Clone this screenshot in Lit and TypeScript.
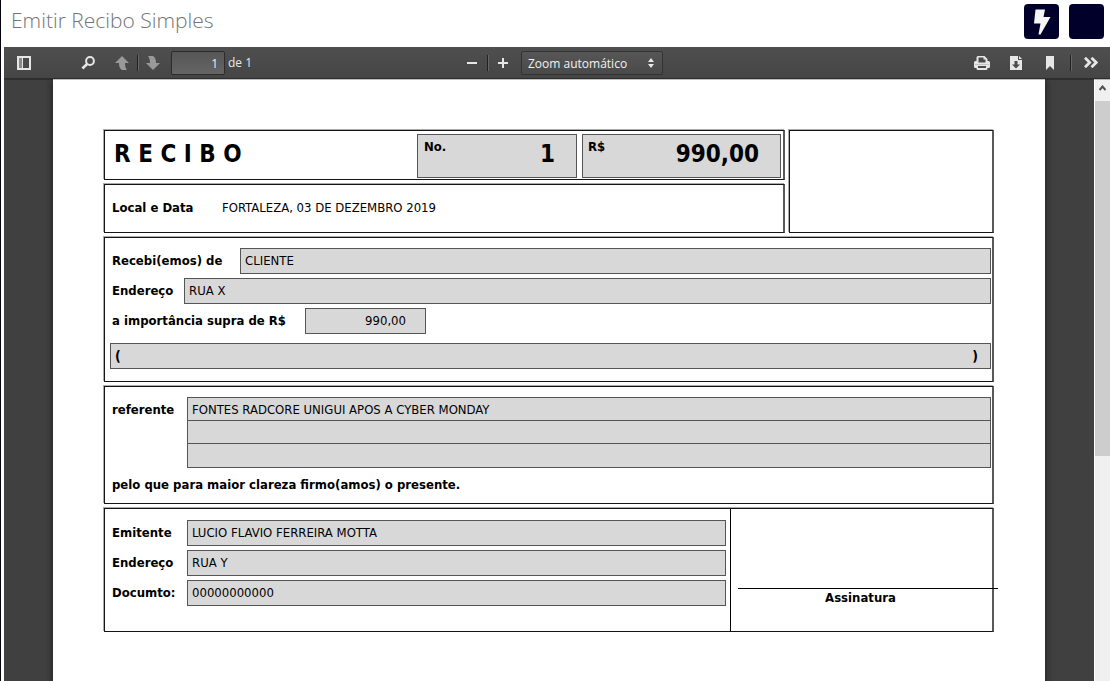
import { LitElement, html, css, svg } from "lit";
import { customElement } from "lit/decorators.js";

const icon = (w: number, h: number, body: unknown) => html`
  <svg width=${w} height=${h} viewBox="0 0 ${w} ${h}" aria-hidden="true">${body}</svg>
`;

@customElement("viewer-toolbar")
class ViewerToolbar extends LitElement {
  static styles = css`
    :host {
      display: flex;
      align-items: center;
      justify-content: space-between;
      box-sizing: border-box;
      height: 32px;
      background: linear-gradient(#4f4f4f, #454545);
      border-bottom: 1px solid #2e2e2e;
      box-shadow: 0 1px 0 rgba(0, 0, 0, 0.25);
      color: #e8e8e8;
      font: 12px/20px "Open Sans", "Noto Sans", sans-serif;
      position: relative;
    }
    .group {
      display: flex;
      align-items: center;
    }
    .left {
      flex: 1 1 0;
      padding-left: 8px;
    }
    .zoom {
      padding-left: 8px;
    }
    .right {
      flex: 1 1 0;
      justify-content: flex-end;
      padding-right: 7px;
    }
    button {
      display: flex;
      align-items: center;
      justify-content: center;
      width: 24px;
      height: 24px;
      padding: 0;
      border: 0;
      background: none;
      color: #e6e6e6;
    }
    button:disabled {
      color: #999;
    }
    .find {
      margin-left: 40px;
    }
    .up {
      margin-left: 10px;
    }
    .split {
      width: 1px;
      height: 16px;
      margin: 0 3px;
      background: #222;
      box-shadow: 1px 0 0 #666;
    }
    .page {
      box-sizing: border-box;
      width: 54px;
      height: 24px;
      margin: 0 3px 0 6px;
      padding: 2px 6px 0;
      border: 1px solid #2c2c2c;
      border-radius: 2px;
      background: linear-gradient(#565656, #656565);
      color: #f0f0f0;
      font: inherit;
      text-align: right;
    }
    .total {
      padding-top: 1px;
    }
    .select {
      display: grid;
      align-items: center;
      margin-left: 6px;
    }
    .select > * {
      grid-area: 1 / 1;
    }
    .select svg {
      justify-self: end;
      margin-right: 9px;
      pointer-events: none;
    }
    select {
      appearance: none;
      box-sizing: border-box;
      width: 142px;
      height: 24px;
      padding: 2px 6px 0;
      border: 1px solid #333;
      border-radius: 2px;
      background: linear-gradient(#565656, #4a4a4a);
      color: #f2f2f2;
      font: inherit;
    }
    .tools {
      gap: 10px;
      margin-right: 5px;
    }
    .more {
      margin-left: 5px;
    }
  `;

  render() {
    return html`
      <div class="group left">
        <button aria-label="Painel lateral">
          ${icon(14, 14, svg`<path d="M1 1h12v12H1z" fill="none" stroke="currentColor" stroke-width="2"/><path d="M2 2h3v10H2z" fill="#8a8a8a"/><path d="M5 2h1v10H5z" fill="currentColor"/>`)}
        </button>
        <button class="find" aria-label="Localizar">
          ${icon(14, 14, svg`<circle cx="9" cy="5" r="3.9" fill="none" stroke="currentColor" stroke-width="2"/><path d="M6.100 8 1.400 12.500" stroke="currentColor" stroke-width="2.600"/>`)}
        </button>
        <button class="up" aria-label="Página anterior" disabled>
          ${icon(16, 16, svg`<path d="M8 1 15 8H11C11 11 11.500 13 13 15H8C5.500 13.500 5 11 5 8H1z" fill="currentColor"/>`)}
        </button>
        <span class="split"></span>
        <button aria-label="Próxima página" disabled>
          ${icon(16, 16, svg`<path d="M8 15 15 8H11C11 5 10.500 2.500 8 1H3C4.500 3 5 5 5 8H1z" fill="currentColor"/>`)}
        </button>
        <input class="page" aria-label="Página" value="1" />
        <span class="total">de 1</span>
      </div>
      <div class="group zoom">
        <button aria-label="Reduzir">${icon(12, 12, svg`<path d="M1 6h10" stroke="currentColor" stroke-width="2"/>`)}</button>
        <span class="split"></span>
        <button aria-label="Ampliar">${icon(12, 12, svg`<path d="M1 6h10M6 1v10" stroke="currentColor" stroke-width="2"/>`)}</button>
        <div class="select">
          <select aria-label="Zoom">
            <option>Zoom automático</option>
          </select>
          ${icon(6, 10, svg`<path d="M3 0 6 4H0zM3 10 0 6h6z" fill="currentColor"/>`)}
        </div>
      </div>
      <div class="group right">
        <div class="group tools">
          <button aria-label="Imprimir">
            ${icon(16, 14, svg`<path d="M2.500 5V1.500Q2.500 0 4 0H10.500L13.500 3V5h1Q16 5 16 6.500V10.500Q16 12 15 12H13.500V12.500Q13.500 14 12 14H4Q2.500 14 2.500 12.500V12H1Q0 12 0 10.500V6.500Q0 5 1.500 5z" fill="currentColor"/><path d="M4.500 1.500h5v2h2V6.500h-7zM4 10h8v2H4z" fill="#4b4b4b"/><path d="M1 8.500h14" stroke="#c4c4c4"/>`)}
          </button>
          <button aria-label="Baixar">
            ${icon(12, 14, svg`<path d="M0 0h8v4h4v10H0z" fill="currentColor"/><path d="M9 0 12 3H9z" fill="currentColor"/><path d="M4.500 5h3v3.500H10L6 12.500 2 8.500h2.500z" fill="#4b4b4b"/>`)}
          </button>
          <button aria-label="Marcador">
            ${icon(8, 14, svg`<path d="M0 0h8v14L4 10 0 14z" fill="currentColor"/>`)}
          </button>
        </div>
        <span class="split"></span>
        <button class="more" aria-label="Ferramentas">
          ${icon(14, 11, svg`<path d="M1 .8 5.700 5.500 1 10.200M7.500 .8l4.700 4.700-4.700 4.700" fill="none" stroke="currentColor" stroke-width="2.800"/>`)}
        </button>
      </div>
    `;
  }
}

@customElement("receipt-page")
class ReceiptPage extends LitElement {
  static styles = css`
    :host {
      display: flex;
      flex-direction: column;
      gap: 4px;
      box-sizing: border-box;
      padding: 51px 51px 60px;
      background: #fff;
      color: #000;
      font: 13px/24px "DejaVu Sans Condensed", "DejaVu Sans", sans-serif;
    }
    .box {
      box-sizing: border-box;
      border: 1px solid #151515;
      border-right: 2px solid #5c5858;
      box-shadow: -1px -1px 0 #aaa;
    }
    .top {
      display: grid;
      grid-template-columns: minmax(0, 1fr) 205px;
      grid-template-rows: 50px 49px;
      gap: 4px;
    }
    .photo {
      grid-area: 1 / 2 / 3 / 3;
    }
    .heading {
      display: flex;
      gap: 5px;
      padding: 3px 2px 1px 9px;
    }
    h2 {
      flex: 1;
      margin: 0;
      font-size: 24px;
      line-height: 40px;
    }
    .field {
      box-sizing: border-box;
      height: 26px;
      padding: 0 4px;
      border: 1px solid #555;
      background: #d8d8d8;
      white-space: nowrap;
    }
    .figure {
      display: flex;
      justify-content: space-between;
      width: 160px;
      height: 44px;
      padding: 0 21px 0 6px;
    }
    .amount {
      width: 199px;
      padding-left: 5px;
    }
    .big {
      font-size: 24px;
      line-height: 38px;
    }
    b {
      font-weight: bold;
    }
    .local {
      display: flex;
      align-items: center;
      padding: 0 0 2px 7px;
    }
    .local b {
      width: 110px;
    }
    .body {
      display: flex;
      flex-direction: column;
      gap: 4px;
      padding: 10px 1px 12px 5px;
    }
    .row {
      display: grid;
      grid-template-columns: 77px minmax(0, 1fr);
      padding-left: 2px;
    }
    .row b {
      padding-top: 1px;
      white-space: nowrap;
    }
    .c1 {
      grid-template-columns: 128px minmax(0, 1fr);
    }
    .c2 {
      grid-template-columns: 72px minmax(0, 1fr);
    }
    .c3 {
      grid-template-columns: 193px 121px;
    }
    .right {
      padding-right: 19px;
      text-align: right;
    }
    .words {
      display: flex;
      justify-content: space-between;
      margin-top: 5px;
      padding-right: 12px;
      font-size: 14px;
    }
    .ref {
      padding-bottom: 6px;
    }
    .c4 {
      grid-template-columns: 75px minmax(0, 1fr);
    }
    .lines .field {
      height: 23px;
      border-bottom: 0;
    }
    .lines .field:last-child {
      height: 25px;
      border-bottom: 1px solid #555;
    }
    .issuer {
      display: grid;
      grid-template-columns: minmax(0, 1fr) 262px;
    }
    .issuer .body {
      padding: 11px 4px 25px 5px;
    }
    .sign {
      display: flex;
      flex-direction: column;
      justify-content: flex-end;
      padding: 0 2px 24px 0;
      border-left: 1px solid #000;
      text-align: center;
    }
    .rule {
      height: 1px;
      margin: 0 -8px 0 7px;
      background: #000;
    }
    .sign b {
      line-height: 18px;
    }
  `;

  private row(cls: string, label: string, value: string, extra = "") {
    return html`<div class="row ${cls}"><b>${label}</b><div class="field ${extra}">${value}</div></div>`;
  }

  render() {
    return html`
      <div class="top">
        <div class="box heading">
          <h2>R E C I B O</h2>
          <div class="field figure"><b>No.</b><b class="big">1</b></div>
          <div class="field figure amount"><b>R$</b><b class="big">990,00</b></div>
        </div>
        <div class="box photo"></div>
        <div class="box local"><b>Local e Data</b><span>FORTALEZA, 03 DE DEZEMBRO 2019</span></div>
      </div>
      <div class="box body">
        ${this.row("c1", "Recebi(emos) de", "CLIENTE")}
        ${this.row("c2", "Endereço", "RUA X")}
        ${this.row("c3", "a importância supra de R$", "990,00", "right")}
        <div class="field words"><b>(</b><b>)</b></div>
      </div>
      <div class="box body ref">
        <div class="row c4">
          <b>referente</b>
          <div class="lines">
            <div class="field">FONTES RADCORE UNIGUI APOS A CYBER MONDAY</div>
            <div class="field"></div>
            <div class="field"></div>
          </div>
        </div>
        <div class="row"><b>pelo que para maior clareza firmo(amos) o presente.</b></div>
      </div>
      <div class="box issuer">
        <div class="body">
          ${this.row("c4", "Emitente", "LUCIO FLAVIO FERREIRA MOTTA")}
          ${this.row("c4", "Endereço", "RUA Y")}
          ${this.row("c4", "Documto:", "00000000000")}
        </div>
        <div class="sign">
          <div class="rule"></div>
          <b>Assinatura</b>
        </div>
      </div>
    `;
  }
}

@customElement("app-root")
class AppRoot extends LitElement {
  static styles = css`
    :host {
      display: flex;
      flex-direction: column;
      box-sizing: border-box;
      height: 100vh;
      overflow: hidden;
      border-left: 1px solid #05050d;
      background: #fff;
    }
    header {
      display: flex;
      justify-content: space-between;
      align-items: flex-start;
      box-sizing: border-box;
      height: 47px;
      padding: 4px 6px 0 10px;
    }
    h1 {
      margin: 0;
      color: #747474;
      font: 300 21px/32px "Open Sans", "Noto Sans", sans-serif;
    }
    .actions {
      display: flex;
      gap: 10px;
    }
    .actions button {
      display: flex;
      align-items: center;
      justify-content: center;
      width: 35px;
      height: 35px;
      padding: 0;
      border: 0;
      border-radius: 4px;
      background: #00002b;
    }
    .viewer {
      display: flex;
      flex: 1;
      flex-direction: column;
      min-height: 0;
      margin-left: 3px;
    }
    .stage {
      display: flex;
      flex: 1;
      min-height: 0;
    }
    .canvas {
      flex: 1;
      min-width: 0;
      padding: 0 49px;
      overflow: hidden;
      background: #404040;
    }
    receipt-page {
      min-height: 100%;
      box-shadow: 0 0 8px rgba(0, 0, 0, 0.6);
    }
    .scroll {
      display: flex;
      flex-direction: column;
      width: 15px;
      border-left: 1px solid #fff;
      background: #f0f0f0;
    }
    .scroll svg {
      display: block;
      margin: 6px 4px 10px;
    }
    .thumb {
      height: 59%;
      background: #cdcdcd;
    }
  `;

  render() {
    return html`
      <header>
        <h1>Emitir Recibo Simples</h1>
        <div class="actions">
          <button aria-label="Processar">
            ${icon(18, 26, svg`<path d="M2.500 .5H12L10.500 8H17.500L7.500 25.500H5.500L7.500 14.500H1z" fill="#f5f5f5"/>`)}
          </button>
          <button aria-label="Opções"></button>
        </div>
      </header>
      <main class="viewer">
        <viewer-toolbar></viewer-toolbar>
        <div class="stage">
          <div class="canvas"><receipt-page></receipt-page></div>
          <div class="scroll">
            ${icon(7, 6, svg`<path d="M.5 5 3.500 1.500 6.500 5" fill="none" stroke="#505050" stroke-width="2"/>`)}
            <div class="thumb"></div>
          </div>
        </div>
      </main>
    `;
  }
}
